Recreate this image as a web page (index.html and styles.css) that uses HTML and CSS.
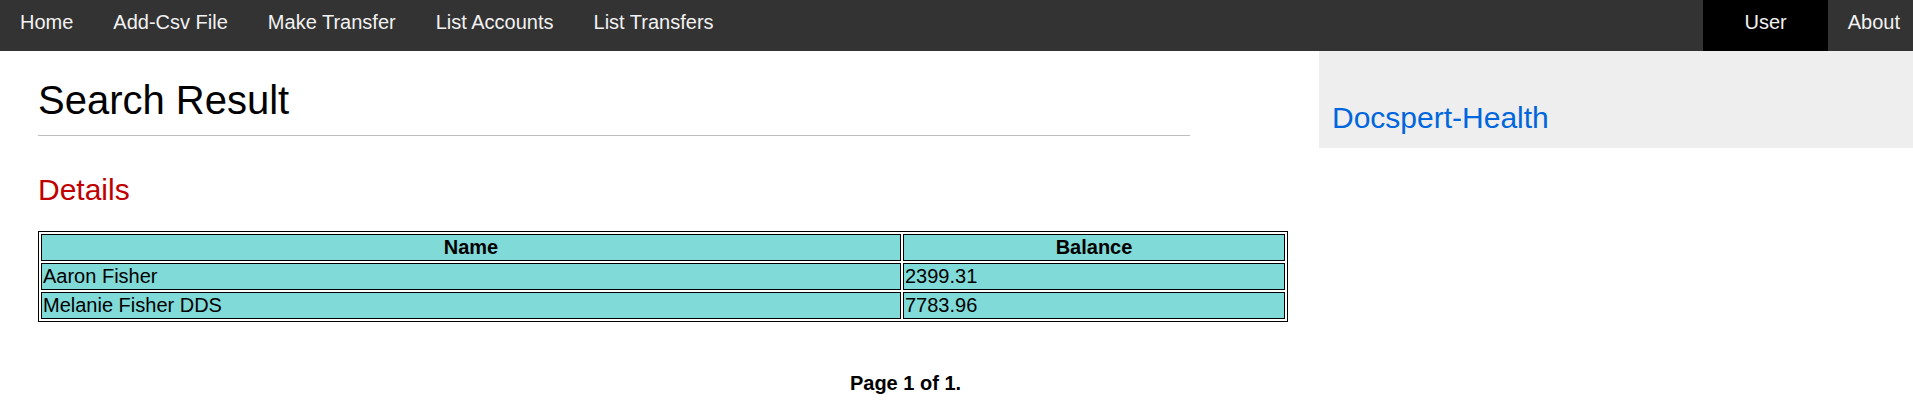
FILE: index.html
```html
<!DOCTYPE html>
<html lang="en">
<head>
<meta charset="utf-8">
<title>Search Result</title>
<link rel="stylesheet" href="styles.css">
</head>
<body>
<nav class="topnav">
  <a class="nav-link" href="#">Home</a>
  <a class="nav-link" href="#">Add-Csv File</a>
  <a class="nav-link" href="#">Make Transfer</a>
  <a class="nav-link" href="#">List Accounts</a>
  <a class="nav-link" href="#">List Transfers</a>
  <span class="nav-spacer"></span>
  <a class="nav-link nav-user" href="#">User</a>
  <a class="nav-link nav-about" href="#">About</a>
</nav>
<div class="page">
  <main class="main">
    <h1 class="title">Search Result</h1>
    <hr class="rule">
    <h2 class="details">Details</h2>
    <table class="results">
      <thead>
        <tr><th class="col-name">Name</th><th class="col-balance">Balance</th></tr>
      </thead>
      <tbody>
        <tr><td>Aaron Fisher</td><td>2399.31</td></tr>
        <tr><td>Melanie Fisher DDS</td><td>7783.96</td></tr>
      </tbody>
    </table>
  </main>
  <aside class="sidebar">
    <h2 class="brand">Docspert-Health</h2>
  </aside>
</div>
<p class="pager">Page 1 of 1.</p>
</body>
</html>
```
FILE: styles.css
```css
html, body {
  margin: 0;
  padding: 0;
  background: #fff;
  font-family: "Liberation Sans", Arial, sans-serif;
  color: #000;
}

.topnav {
  display: flex;
  background: #333;
  height: 51px;
}

.nav-link {
  display: block;
  font-size: 20px;
  line-height: 23px;
  padding: 11px 20px 17px;
  color: #f2f2f2;
  text-decoration: none;
}

.nav-spacer {
  flex: 1;
}

.nav-user {
  background: #000;
  padding-left: 42px;
  padding-right: 41px;
}

.nav-about {
  padding-right: 13px;
}

.page {
  display: flex;
  align-items: flex-start;
}

.main {
  flex: 1;
  padding: 26px 31px 0 38px;
}

.title {
  margin: 0;
  font-size: 40px;
  line-height: 46px;
  font-weight: normal;
}

.rule {
  margin: 12px 98px 0 0;
  height: 0;
  border: 0;
  border-top: 1px solid #bdbdbd;
}

.details {
  margin: 37px 0 0;
  font-size: 30px;
  line-height: 34px;
  font-weight: normal;
  color: #c00000;
}

.results {
  margin-top: 24px;
  width: 1250px;
  border: 1px solid #000;
  border-spacing: 2px;
  font-size: 20px;
  line-height: 23px;
}

.results th,
.results td {
  border: 1px solid #000;
  padding: 1px;
  background: #80dad8;
  text-align: left;
}

.results th {
  text-align: center;
  font-weight: bold;
}

.col-name {
  width: 856px;
}

.sidebar {
  width: 594px;
  box-sizing: border-box;
  background: #eee;
  padding: 50px 13px 13px;
}

.brand {
  margin: 0;
  font-size: 30px;
  line-height: 34px;
  font-weight: normal;
  color: #0066dd;
}

.pager {
  margin: 50px 0 0;
  padding-right: 102px;
  text-align: center;
  font-size: 20px;
  line-height: 23px;
  font-weight: bold;
}
```
